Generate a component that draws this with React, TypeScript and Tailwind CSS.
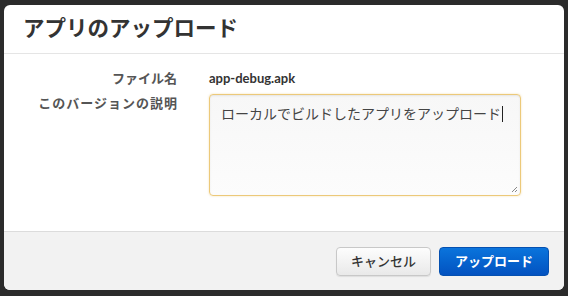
import React from "react";

export default function App() {
  const jp = { fontFamily: '"Lato", "Noto Sans CJK JP", sans-serif' };
  return (
    <div className="w-[568px] h-[296px] bg-[#2b2b2b] pt-[5px] pl-[4px]" style={jp}>
      <div className="w-[560px] h-[285px] bg-white rounded-[6px] flex flex-col overflow-hidden">
        <div className="h-[49px] border-b border-[#e5e5e5] flex items-center pl-[19px]">
          <h1 className="text-[21.5px] font-bold text-[#333] leading-none">アプリのアップロード</h1>
        </div>
        <div className="flex-1 flex pt-[13px]">
          <div className="w-[173px] flex flex-col items-end text-[13px] font-bold text-[#555] leading-[22px]">
            <div>ファイル名</div>
            <div className="mt-[3px] tracking-[1px] mr-[-1px]">このバージョンの説明</div>
          </div>
          <div className="flex flex-col pl-[32px]">
            <div className="text-[13px] font-bold text-[#333] leading-[22px]">app-debug.apk</div>
            <div className="mt-[5px] w-[312px] h-[102px] rounded-[4px] border border-[#ecc97a] bg-gradient-to-b from-[#f7f7f7] to-[#fcfcfc] shadow-[inset_0_1px_2px_rgba(0,0,0,0.08),0_0_2px_rgba(236,190,90,0.5)] relative">
              <div className="pl-[11px] pt-[9px] text-[14px] text-[#444] leading-[20px] flex items-center">
                ローカルでビルドしたアプリをアップロード
                <span className="inline-block w-px h-[16px] bg-[#222] ml-[1px]" />
              </div>
              <svg className="absolute right-[2px] bottom-[2px]" width="7" height="7" viewBox="0 0 7 7">
                <path d="M6 1 L1 6 M6 4 L4 6" stroke="#888" strokeWidth="1" />
              </svg>
            </div>
          </div>
        </div>
        <div className="h-[59px] bg-[#f2f2f2] border-t border-[#dcdcdc] flex items-center justify-end pr-[15px] gap-[8px] pt-[1px]">
          <button className="w-[95px] h-[29px] rounded-[4px] border border-[#c8c8c8] bg-gradient-to-b from-[#fdfdfd] to-[#e9e9e9] text-[13px] text-[#333] font-medium shadow-[0_1px_1px_rgba(0,0,0,0.08)]">
            キャンセル
          </button>
          <button className="w-[110px] h-[29px] rounded-[4px] border border-[#0550b0] bg-gradient-to-b from-[#0b74dc] to-[#0452c0] text-[13px] text-white font-bold">
            アップロード
          </button>
        </div>
      </div>
    </div>
  );
}
